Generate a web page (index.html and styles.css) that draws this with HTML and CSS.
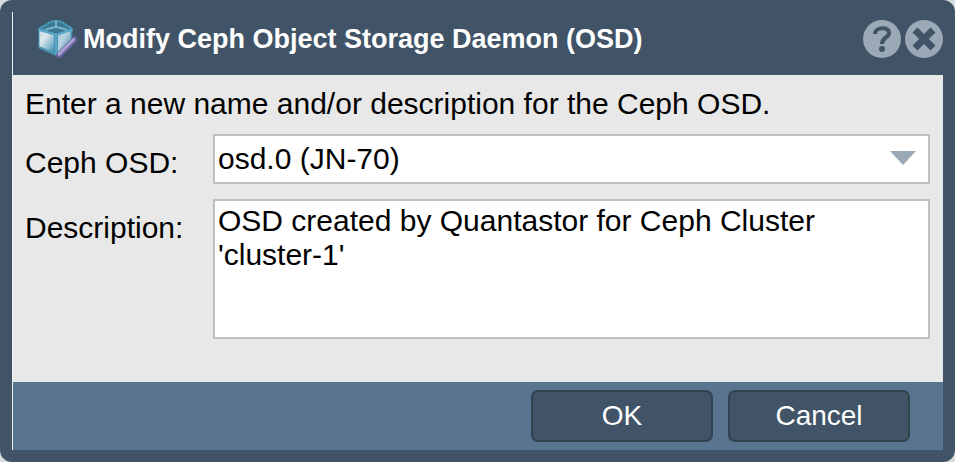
FILE: index.html
```html
<!DOCTYPE html>
<html lang="en">
<head>
  <meta charset="UTF-8" />
  <meta name="viewport" content="width=device-width, initial-scale=1" />
  <title>Modify Ceph Object Storage Daemon (OSD)</title>
  <link rel="stylesheet" href="styles.css">
</head>
<body>

  <form class="dialog">
    <div class="dialog-inner">

      <header class="dialog-header">
        <svg class="dialog-icon" viewBox="0 0 40 40" aria-hidden="true">
          <defs>
            <linearGradient id="leftFace" x1="0" y1="0" x2="1" y2="1">
              <stop offset="0" stop-color="#c9dde6" />
              <stop offset="0.35" stop-color="#dbe7ee" />
              <stop offset="1" stop-color="#3e8fb0" />
            </linearGradient>
            <linearGradient id="rightFace" x1="0" y1="0" x2="1" y2="1">
              <stop offset="0" stop-color="#a9cfde" />
              <stop offset="0.4" stop-color="#b9d3df" />
              <stop offset="1" stop-color="#3b86a8" />
            </linearGradient>
          </defs>
          <path d="M1 9 L13 2 Q19 0 25 2 L36 9 L35 29 L19 38 L1 30 Z" fill="#4792b1" />
          <path d="M4 10 L14 4 Q19 2 24 4 L33 10 L20 15 Z" fill="#3d7894" />
          <path d="M19 2 V9 M8 11 L19 8 L30 11" fill="none" stroke="#7db4c9" stroke-width="2" />
          <path d="M2 12 L17 17 V34 L2 28 Z" fill="url(#leftFace)" />
          <path d="M21 17 L34 12 V26 L21 34 Z" fill="url(#rightFace)" />
          <path d="M1 11 L19 16 L36 11 M19 15 V37" fill="none" stroke="#5aaac7" stroke-width="2" />
          <path d="M22 37 L38 21" stroke="#6a64a3" stroke-width="6" stroke-linecap="round" />
          <path d="M22 36 L37 21" stroke="#aaa3cf" stroke-width="3" stroke-linecap="round" />
        </svg>
        <h1>Modify Ceph Object Storage Daemon (OSD)</h1>
        <button type="button" class="icon-button" aria-label="Help">
          <svg viewBox="0 0 38 38">
            <circle cx="19" cy="19" r="19" />
            <path d="M12 14 C12 7 26 6 26 13 C26 18 19 17 19 24" />
            <circle class="dot" cx="19" cy="29" r="3" />
          </svg>
        </button>
        <button type="button" class="icon-button" aria-label="Close">
          <svg viewBox="0 0 38 38">
            <circle cx="19" cy="19" r="19" />
            <path class="cross" d="M10 10 L28 28 M28 10 L10 28" />
          </svg>
        </button>
      </header>

      <main class="dialog-body">
        <p>Enter a new name and/or description for the Ceph OSD.</p>

        <div class="field">
          <label for="osd">Ceph OSD:</label>
          <div class="select-wrap">
            <select id="osd">
              <option>osd.0 (JN-70)</option>
            </select>
            <svg class="arrow" viewBox="0 0 26 14" aria-hidden="true">
              <path d="M0 0 H26 L13 14 Z" />
            </svg>
          </div>
        </div>

        <div class="field">
          <label for="description">Description:</label>
          <textarea id="description">OSD created by Quantastor for Ceph Cluster 'cluster-1'</textarea>
        </div>
      </main>

      <footer class="dialog-footer">
        <button type="button" class="button">OK</button>
        <button type="button" class="button">Cancel</button>
      </footer>

    </div>
  </form>

</body>
</html>
```
FILE: styles.css
```css
:root {
  --frame-color: #415367;
  --footer-bg: #59748f;
  --body-bg: #e8e8e8;
  --border-color: #bfbfbf;
  --icon-color: #9ba8b5;
  --font-stack: "Liberation Sans", Arial, sans-serif;
}

* {
  margin: 0;
  padding: 0;
  box-sizing: border-box;
}

body {
  font-family: var(--font-stack);
  font-size: 30px;
  line-height: 34px;
  color: #000;
  background-color: #d9dcdc;
}

.dialog {
  display: flex;
  min-height: 100vh;
  padding: 12px;
  background-color: var(--frame-color);
  border-radius: 12px;
}

.dialog-inner {
  flex: 1;
  display: flex;
  flex-direction: column;
  border-left: 1px solid #f0f0f0;
}

.dialog-header {
  display: flex;
  align-items: center;
  gap: 4px;
  padding: 7px 0 17px 24px;
}

.dialog-icon {
  width: 40px;
  height: 39px;
}

.dialog-header h1 {
  flex: 1;
  padding-left: 2px;
  font-size: 27px;
  line-height: 34px;
  color: #fff;
}

.icon-button {
  width: 38px;
  height: 38px;
  border: none;
  background: none;
  cursor: pointer;
}

.icon-button svg {
  display: block;
  fill: var(--icon-color);
}

.icon-button path {
  fill: none;
  stroke: var(--frame-color);
  stroke-width: 4;
}

.icon-button .dot {
  fill: var(--frame-color);
}

.icon-button .cross {
  stroke-width: 7;
}

.dialog-body {
  flex: 1;
  display: flex;
  flex-direction: column;
  gap: 15px;
  padding: 12px 13px 43px 12px;
  background-color: var(--body-bg);
}

.dialog-body p {
  margin-bottom: -2px;
}

.field {
  display: grid;
  grid-template-columns: 188px 1fr;
}

.field label {
  padding-top: 12px;
}

.select-wrap {
  position: relative;
}

.field select,
.field textarea {
  display: block;
  width: 100%;
  border: 2px solid var(--border-color);
  border-radius: 0;
  background-color: #fff;
  color: #000;
  font: inherit;
}

.field select {
  height: 50px;
  padding-left: 3px;
  appearance: none;
}

.field textarea {
  height: 140px;
  padding: 3px;
  resize: none;
}

.arrow {
  position: absolute;
  top: 17px;
  right: 14px;
  width: 26px;
  height: 14px;
  fill: var(--icon-color);
  pointer-events: none;
}

.dialog-footer {
  display: flex;
  justify-content: flex-end;
  gap: 15px;
  padding: 8px 33px 8px 12px;
  background-color: var(--footer-bg);
}

.button {
  width: 182px;
  height: 52px;
  border: 2px solid #33424f;
  border-radius: 7px;
  background-color: var(--frame-color);
  color: #fff;
  font-family: inherit;
  font-size: 28px;
  cursor: pointer;
}

.button:hover {
  background-color: #4b6078;
}
```
